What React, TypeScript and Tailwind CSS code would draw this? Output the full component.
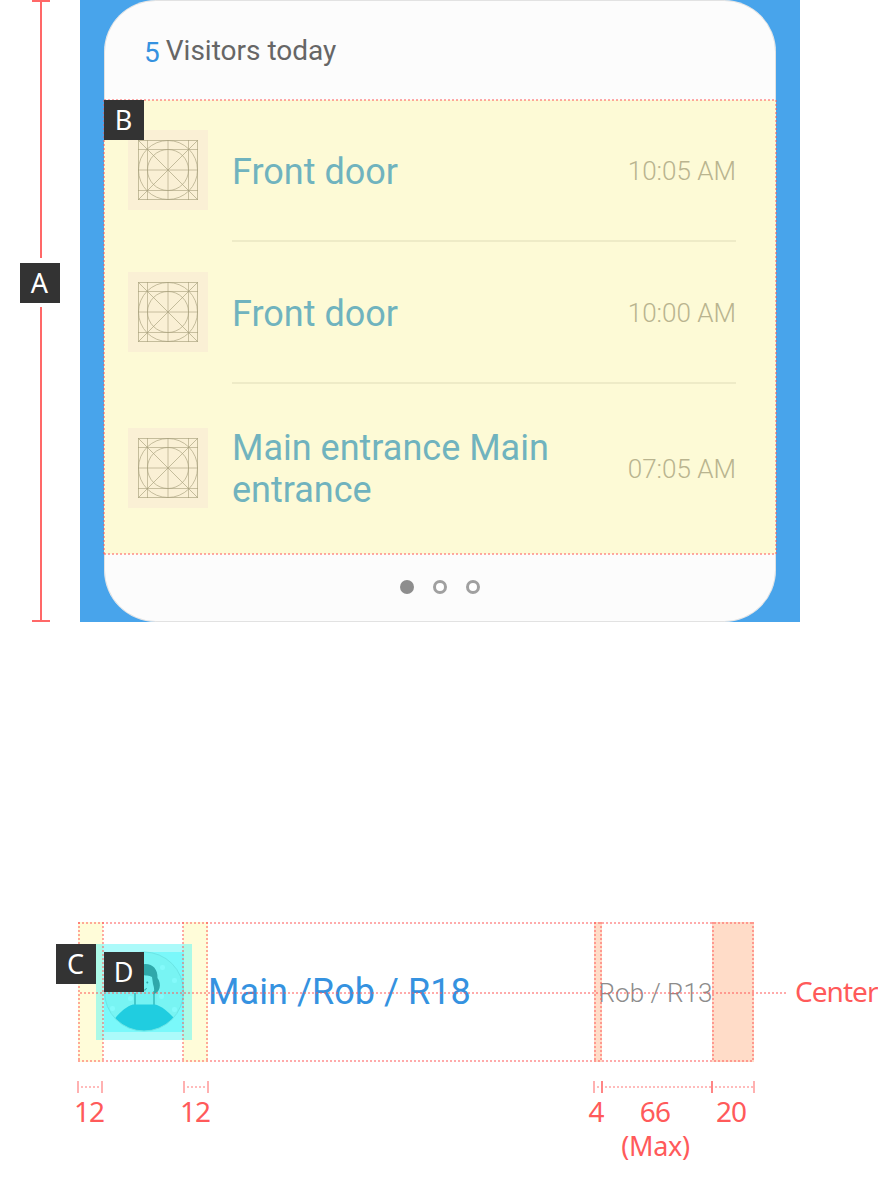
import React from "react";

const H_DOTS = "h-[2px] bg-[repeating-linear-gradient(90deg,#ff5555_0_2px,transparent_2px_4px)] opacity-50";
const V_DOTS = "w-[2px] bg-[repeating-linear-gradient(180deg,#ff5555_0_2px,transparent_2px_4px)] opacity-50";
const NOTE = "font-['Noto_Sans',sans-serif] text-[28px] leading-[34px] text-[#ff5a5a] whitespace-nowrap";

function Badge({ label, className = "" }: { label: string; className?: string }) {
  return (
    <div
      className={`flex h-10 w-10 items-center justify-center bg-[#333333] pr-px font-['Noto_Sans',sans-serif] text-[27px] leading-10 text-white ${className}`}
    >
      {label}
    </div>
  );
}

function KeylineIcon() {
  return (
    <div className="flex h-20 w-20 shrink-0 items-center justify-center bg-[#faf0d5]">
      <svg width="60" height="60" viewBox="0 0 60 60" fill="none" stroke="#a79f7c" strokeOpacity="0.65">
        <rect x="0.5" y="0.5" width="59" height="59" />
        <path d="M9.5 0V60M50.5 0V60M0 9.5H60M0 50.5H60" strokeOpacity="0.6" />
        <path d="M30 0V60M0 30H60" strokeOpacity="0.6" />
        <path d="M0 0L60 60M60 0L0 60" />
        <circle cx="30" cy="30" r="29.5" />
        <circle cx="30" cy="30" r="20.5" />
      </svg>
    </div>
  );
}

function Visitor({ place, time, className }: { place: string; time: string; className: string }) {
  return (
    <div className={`flex items-center pl-6 pr-10 ${className}`}>
      <KeylineIcon />
      <div className="ml-6 w-[340px] text-[36px] leading-[42px] text-[#70b3be]">{place}</div>
      <div className="ml-auto pt-[2px] text-[26px] font-light leading-[30px] whitespace-nowrap text-[#b9b48f]">{time}</div>
    </div>
  );
}

function Avatar() {
  return (
    <svg className="absolute left-[18px] top-[22px]" width="96" height="96" viewBox="0 0 96 96" fill="none">
      <rect width="96" height="96" fill="#5af5f5" fillOpacity="0.5" />
      <rect x="8" y="8" width="80" height="80" fill="#7af8fa" />
      <clipPath id="portrait">
        <circle cx="48" cy="47.5" r="39.5" />
      </clipPath>
      <g clipPath="url(#portrait)">
        <rect x="8" y="8" width="80" height="80" fill="#78f4f3" />
        <g fill="#84fafb">
          <rect x="64" y="21" width="5" height="5" rx="2" />
          <rect x="76" y="34" width="5" height="5" rx="2" />
          <rect x="63" y="50" width="5" height="5" rx="2" />
          <rect x="76" y="63" width="5" height="5" rx="2" />
          <rect x="32" y="52" width="5" height="5" rx="2" />
          <rect x="14" y="62" width="5" height="5" rx="2" />
        </g>
        <path d="M39 62V38C36 22 42 20 50 20C58 20 62 26 61 34V62" fill="#74f2f2" />
        <path d="M39 49V62M58 47V62" stroke="#38bdc0" strokeWidth="1.6" />
        <path d="M45 20.5C55 18 62 24 61.5 34C66 40 64 49 57 50.5C59 47 58 43 57 40L56 33C53 31 50 32 45 31Z" fill="#2fa8aa" />
        <circle cx="51.3" cy="38.5" r="1" fill="#2fa8aa" />
        <path d="M47 46Q50 47 50.5 44" stroke="#2fa8aa" />
        <path d="M18.5 75C24 68 31 62 37 60.5H59C66 62 72 68 78 74C73 85 60 90 48 90C36 90 25 85 18.5 75Z" fill="#20cde0" />
      </g>
      <circle cx="48" cy="47.5" r="39.5" stroke="#6be5e5" strokeWidth="1" />
    </svg>
  );
}

function Tick({ strong = false }: { strong?: boolean }) {
  return <div className={`h-3 w-[2px] shrink-0 ${strong ? "bg-[#ff8585]" : "bg-[#ffb1b1]"}`} />;
}

function Span({ className }: { className: string }) {
  return (
    <div className={`flex shrink-0 items-center ${className}`}>
      <div className="h-[2px] w-full bg-[repeating-linear-gradient(90deg,transparent_0_2px,#ff5555_2px_4px)] opacity-40" />
    </div>
  );
}

export default function App() {
  return (
    <main className="h-[1198px] w-[878px] overflow-hidden bg-white font-['Roboto',sans-serif]">
      <section className="flex h-[622px]">
        <div className="flex w-20 flex-col items-center pl-[2px]">
          <div className="h-[2px] w-[18px] bg-[#ff6868]" />
          <div className="h-[256px] w-[2px] bg-[#ff6868]" />
          <Badge label="A" className="mb-1 mt-[5px] mr-[2px] shrink-0" />
          <div className="w-[2px] flex-1 bg-[#ff6868]" />
          <div className="h-[2px] w-[18px] bg-[#ff6868]" />
        </div>
        <div className="w-[720px] bg-[#48a4eb] px-6">
          <div className="relative flex h-full w-[672px] flex-col rounded-[52px] bg-[#fcfcfc]">
            <div className="pointer-events-none absolute inset-0 rounded-[52px] border border-black/10" />
            <header className="flex h-[100px] shrink-0 pl-10 pt-[34px] text-[28px] leading-[33px]">
              <span className="mt-[2px] text-[#3592e0]">5</span>
              <span className="ml-[6px] text-[#666666]">Visitors today</span>
            </header>
            <div className="relative h-[454px] bg-[#fdfad6]">
              <Visitor place="Front door" time="10:05 AM" className="h-[140px] [&>div:nth-child(2)]:pt-[3px]" />
              <div className="ml-32 mr-10 h-[2px] bg-[#eeebc7]" />
              <Visitor place="Front door" time="10:00 AM" className="h-[140px] [&>div:nth-child(2)]:pt-[3px]" />
              <div className="ml-32 mr-10 h-[2px] bg-[#eeebc7]" />
              <Visitor place="Main entrance Main entrance" time="07:05 AM" className="h-[168px] [&>div:nth-child(2)]:pt-[2px]" />
              <div className={`absolute -top-px left-0 w-full ${H_DOTS}`} />
              <div className={`absolute -bottom-px left-0 w-full ${H_DOTS}`} />
              <div className={`absolute -left-px top-0 h-full ${V_DOTS}`} />
              <div className={`absolute -right-px top-0 h-full ${V_DOTS}`} />
              <Badge label="B" className="absolute left-0 top-0" />
            </div>
            <div className="flex gap-[19px] pl-[296px] pt-[26px]">
              <span className="h-[14px] w-[14px] rounded-full bg-[#8d8d8d]" />
              <span className="h-[14px] w-[14px] rounded-full border-[3px] border-[#a0a0a0] bg-white" />
              <span className="h-[14px] w-[14px] rounded-full border-[3px] border-[#a0a0a0] bg-white" />
            </div>
          </div>
        </div>
      </section>

      <section className="mt-[300px] pl-[78px]">
        <div className="relative flex h-[140px] w-[676px] items-stretch">
          <div className="w-[25px] bg-[#fffcd9]" />
          <div className="w-[80px]" />
          <div className="w-[25px] bg-[#fffcd9]" />
          <div className="flex w-[386px] items-center pb-px text-[36px] leading-[42px] tracking-[0.08px] whitespace-nowrap text-[#3592e0]">Main /Rob / R18</div>
          <div className="w-[8px] bg-[#ffdcc8]" />
          <div className="flex w-[110px] items-center justify-center pr-[3px] pt-[2px] text-[26px] font-light leading-[30px] whitespace-nowrap text-[#8c8c8c]">Rob / R13</div>
          <div className="w-[42px] bg-[#ffdcc8]" />
          <Avatar />
          <div className={`absolute left-0 top-0 w-full ${H_DOTS}`} />
          <div className={`absolute bottom-0 left-0 w-full ${H_DOTS}`} />
          <div className={`absolute left-[2px] top-[70px] w-[708px] ${H_DOTS}`} />
          <div className={`absolute left-0 top-0 h-full ${V_DOTS}`} />
          <div className={`absolute left-[24px] top-0 h-full ${V_DOTS}`} />
          <div className={`absolute left-[104px] top-0 h-full ${V_DOTS}`} />
          <div className={`absolute left-[128px] top-0 h-full ${V_DOTS}`} />
          <div className={`absolute left-[516px] top-0 h-full ${V_DOTS}`} />
          <div className={`absolute left-[522px] top-0 h-full ${V_DOTS}`} />
          <div className={`absolute left-[634px] top-0 h-full ${V_DOTS}`} />
          <div className={`absolute right-0 top-0 h-full ${V_DOTS}`} />
          <Badge label="C" className="absolute left-[-22px] top-[22px]" />
          <Badge label="D" className="absolute left-[26px] top-[30px]" />
          <div className={`absolute left-[717px] top-[52px] tracking-[-0.95px] ${NOTE}`}>Center</div>
        </div>
        <div className="mt-[19px] -ml-px flex h-3">
          <Tick />
          <Span className="w-[22px]" />
          <Tick />
          <div className="w-[80px]" />
          <Tick />
          <Span className="w-[22px]" />
          <Tick />
          <div className="w-[384px]" />
          <Tick />
          <Span className="w-[6px]" />
          <Tick strong />
          <Span className="w-[108px]" />
          <Tick strong />
          <Span className="w-[40px]" />
          <Tick />
        </div>
        <div className={`mt-px -ml-[19px] flex text-center tracking-[-1px] ${NOTE}`}>
          <div className="w-[60px]">12</div>
          <div className="ml-[46px] w-[60px]">12</div>
          <div className="ml-[355px] w-[32px]">4</div>
          <div className="ml-[3px] flex w-[80px] flex-col">
            <div className="h-[34px] tracking-[-0.8px]">66</div>
            <div className="h-[34px] pl-px pt-px text-[27px] tracking-[-0.3px]">(Max)</div>
          </div>
          <div className="ml-[6px] w-[60px]">20</div>
        </div>
      </section>
    </main>
  );
}
